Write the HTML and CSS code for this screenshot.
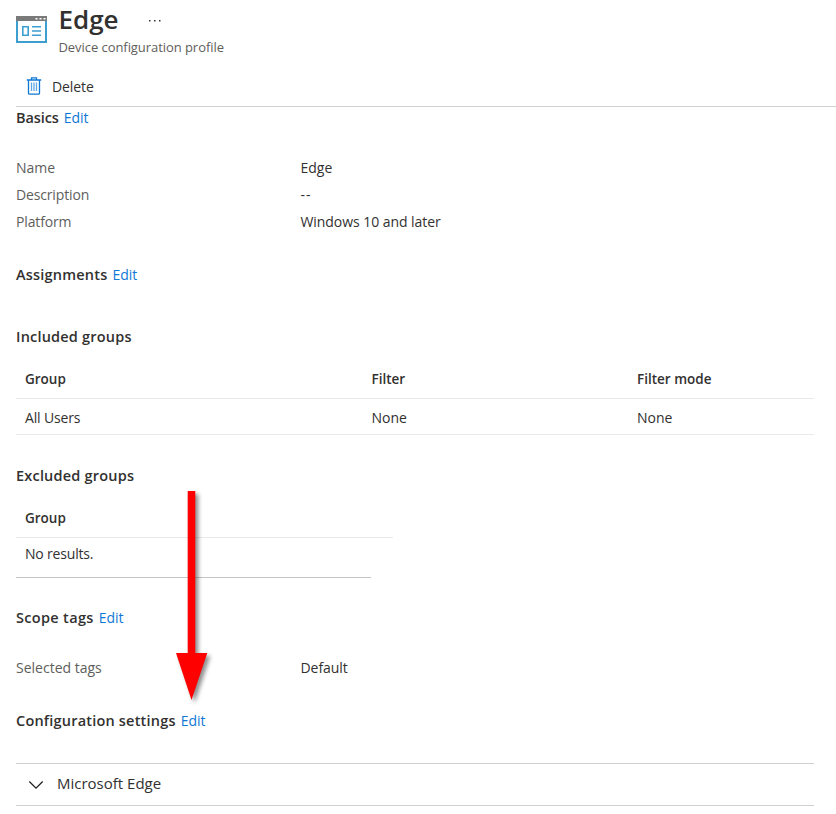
FILE: index.html
```
<!DOCTYPE html>
<html lang="en">
<head>
<meta charset="utf-8">
<title>Edge - Device configuration profile</title>
<link rel="stylesheet" href="styles.css">
</head>
<body>
<main class="page">
  <header class="header">
    <svg class="profile-icon" width="31" height="28" viewBox="0 0 31 28">
      <rect x="1" y="1" width="29" height="25" fill="#fff" stroke="#3c9fd0" stroke-width="2"/>
      <path fill="#7a7a7a" d="M0 0h31v5H0z"/>
      <path fill="#fff" d="M19.500 2h2v1.500h-2zM23.500 2h2v1.500h-2zM27.500 2h2v1.500h-2z"/>
      <path fill="none" stroke="#3c9fd0" stroke-width="1.600" d="M6.800 10.800h5.400v8.400H6.800zM16 10.800h9M16 15h9M16 19.200h9"/>
    </svg>
    <div class="heading">
      <div class="title-row"><h1 class="title">Edge</h1>
        <svg class="more" width="14" height="4" viewBox="0 0 14 4"><path fill="#333" d="M1 1h1.500v1.500H1zM6 1h1.500v1.500H6zM11 1h1.500v1.500H11z"/></svg>
      </div>
      <p class="subtitle">Device configuration profile</p>
    </div>
  </header>
  <div class="toolbar">
    <svg class="trash" width="16" height="18" viewBox="0 0 16 18">
      <path fill="#fff" stroke="#0f78d4" stroke-width="1.300" d="M.8 3h14.400M5.500 3V.8h5V3M2.500 3v13q0 1.200 1.200 1.200h8.600q1.200 0 1.200-1.200V3"/>
      <path fill="none" stroke="#5ea6e4" stroke-width="1.300" d="M5.500 5.500v8.500M8 5.500v8.500M10.500 5.500v8.500"/>
    </svg>
    <span class="delete">Delete</span>
  </div>
  <div class="content">
    <h2 class="section basics"><span>Basics</span><a class="edit">Edit</a></h2>
    <dl class="props">
      <dt>Name</dt><dd>Edge</dd>
      <dt class="tight">Description</dt><dd class="dash">--</dd>
      <dt class="tight">Platform</dt><dd class="platform">Windows 10 and later</dd>
    </dl>
    <h2 class="section assignments"><span>Assignments</span><a class="edit">Edit</a></h2>
    <h3 class="section included">Included groups</h3>
    <div class="grid head"><span>Group</span><span>Filter</span><span>Filter mode</span></div>
    <div class="grid row"><span class="tight">All Users</span><span>None</span><span>None</span></div>
    <h3 class="section excluded">Excluded groups</h3>
    <div class="grid head narrow"><span>Group</span></div>
    <div class="empty">No results.</div>
    <h2 class="section scope"><span>Scope tags</span><a class="edit">Edit</a></h2>
    <dl class="props tags"><dt>Selected tags</dt><dd class="platform">Default</dd></dl>
    <h2 class="section config"><span>Configuration settings</span><a class="edit">Edit</a></h2>
    <div class="accordion">
      <svg width="16" height="10" viewBox="0 0 16 10"><path fill="none" stroke="#222" stroke-width="1.300" d="M1.300 1.500 8 8.200l6.700-6.700"/></svg>
      <span class="category">Microsoft Edge</span>
    </div>
  </div>
  <svg class="arrow" width="50" height="226" viewBox="0 0 50 226"><path fill="#f00" d="M17.700 11h7.600v162h12L21.500 220 6 173h11.700z"/></svg>
</main>
</body>
</html>
```
FILE: styles.css
```
* { box-sizing: border-box; }
body { margin: 0; background: #fff; color: #323130; font: 14px/20px "Open Sans", "Noto Sans", sans-serif; }
h1, h2, h3, p, dl, dd { margin: 0; font-size: inherit; }
.page { position: relative; width: 836px; height: 814px; overflow: hidden; }
.header { display: flex; height: 66px; padding-left: 16px; }
.profile-icon { margin: 16px 11.500px 0 0; }
.title-row { display: flex; height: 38px; align-items: center; }
.title { font-size: 26px; line-height: 38px; font-weight: 600; }
.more { margin: 3px 0 0 29px; }
.subtitle { color: #605e5c; font-size: 13px; line-height: 18px; letter-spacing: -.06px; }
.toolbar { display: flex; align-items: center; gap: 10px; height: 41px; margin-left: 16px; padding-left: 10px; border-bottom: 1px solid #d0d0d0; }
.delete { padding-top: 1px; letter-spacing: -.1px; }
.content { width: 798px; margin-left: 16px; }
.section { display: flex; height: 20px; font-size: 14.500px; font-weight: 600; letter-spacing: .2px; gap: 5px; }
.edit { color: #0f78d4; font-size: 14px; font-weight: 400; letter-spacing: 0; }
.basics { margin-top: 1px; letter-spacing: -.1px; }
.props { display: grid; grid-template-columns: 284.500px 1fr; grid-auto-rows: 27px; align-items: center; margin-top: 26px; }
.props dt { color: #605e5c; }
.tight { letter-spacing: -.15px; }
.dash { letter-spacing: 1px; }
.platform { letter-spacing: -.06px; }
.assignments { margin-top: 30px; }
.included { margin-top: 42px; }
.grid { display: grid; grid-template-columns: 346.500px 265.500px 1fr; align-items: center; padding: 2px 0 0 9px; border-bottom: 1px solid #eaeaea; }
.head { height: 41px; margin-top: 11px; font-weight: 600; font-size: 13.500px; }
.row { height: 36px; }
.excluded { margin-top: 31px; }
.narrow { width: 377px; }
.empty { width: 355px; height: 40px; padding: 6px 0 0 9px; border-bottom: 1px solid #c8c6c4; letter-spacing: -.18px; }
.scope { margin-top: 30px; letter-spacing: .32px; }
.config { margin-top: 30px; }
.accordion { display: flex; align-items: center; gap: 13px; height: 43px; margin-top: 32px; padding-left: 12px; border: solid #d0d0d0; border-width: 1px 0; }
.category { padding-bottom: 3px; font-size: 15px; }
.arrow { position: absolute; left: 170px; top: 480px; filter: drop-shadow(3px 3px 2px rgba(0, 0, 0, .45)); }
```
